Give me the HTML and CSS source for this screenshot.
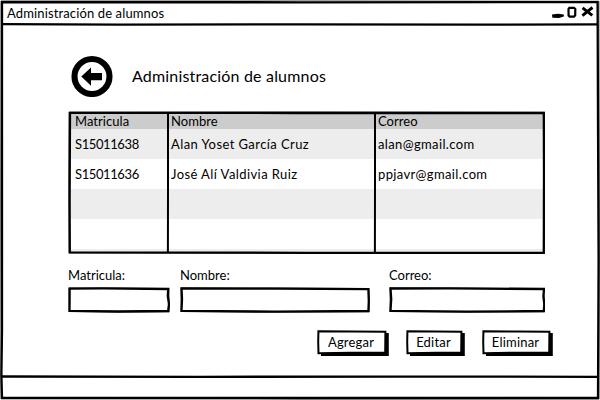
FILE: index.html
```html
<!DOCTYPE html>
<html lang="es">
<head>
<meta charset="utf-8">
<title>Administración de alumnos</title>
<link rel="stylesheet" href="styles.css">
</head>
<body>
<div class="window">
  <svg class="sketch" viewBox="0 0 600 400">
    <path class="soft" d="M1 1.2L300 .8L599 1.2L599.4 200L599 399L300 399.2L1 399L.6 200Z"/>
    <path class="line" d="M2 2L300 2.3L597.6 2.1L598 120L598.6 260L598 398L300 398L2 397.8L1.4 375L2 330L2 180Z"/>
    <path class="line" d="M2 24.1L120 24.6L300 24.4L480 24.6L598 24.4"/>
    <path class="line" d="M2 376.5L200 376.8L400 376.6L598 376.8"/>
  </svg>
  <header class="titlebar">
    <span class="caption">Administración de alumnos</span>
    <svg class="controls" width="44" height="16" viewBox="0 0 44 16">
      <path d="M1 9.6L7 8.8L12.8 9.4L12.8 11.6L8 13L1.4 12.8Z"/>
      <path class="box" d="M18.3 2.8L23 2.8L24.3 4L24.2 10.3L23 11.7L18.6 11.7L17.6 10.5L17.5 4Z"/>
      <path class="cross" d="M31.6 2.8L36 6.4L41.3 10.3M41.5 2.5L36 6.8L31.4 10.6"/>
    </svg>
  </header>
  <main class="content">
    <div class="heading">
      <svg class="back" width="42" height="42" viewBox="0 0 42 42">
        <circle cx="21" cy="21.5" r="17.5"/>
        <path d="M10.3 21.6L20 12.5V18H31V25.2H20V30.8Z"/>
      </svg>
      <h1>Administración de alumnos</h1>
    </div>
    <section class="table">
      <svg class="sketch" viewBox="0 0 477 143">
        <path class="soft" d="M1 1L240 .8L476.6 1.2L477 90L476.8 142.6L240 142.6L1 142L.6 70Z"/>
        <path class="line" d="M2 1.8L230 2L475.8 2L476 60L475.8 141.8L240 141.8L1.8 141.4L1.6 90Z"/>
      </svg>
      <div class="row head"><span>Matricula</span><span>Nombre</span><span>Correo</span></div>
      <div class="row shade"><span class="t-id">S15011638</span><span class="t-name">Alan Yoset García Cruz</span><span class="t-mail">alan@gmail.com</span></div>
      <div class="row"><span class="t-id">S15011636</span><span class="t-name">José Alí Valdivia Ruiz</span><span class="t-mail">ppjavr@gmail.com</span></div>
      <div class="row shade"></div>
      <div class="row"></div>
      <div class="row shade last"></div>
      <svg class="sketch" viewBox="0 0 477 143">
        <path class="rule" d="M100 2L100 80L99.9 141M307 2L307 70L306.9 141"/>
      </svg>
    </section>
    <section class="form">
      <div class="field"><label>Matricula:</label>
        <div class="input"><svg class="sketch" viewBox="0 0 102 26"><path class="soft" d="M1 .8L50 1L101 1.6L101.4 24.8L50 25.2L1 24.4Z"/><path class="line" d="M1.6 1.6L35 1.4L100.2 2L99.8 9L101 17L100.2 24L50 24.5L1.5 23.8L1.6 12Z"/></svg></div></div>
      <div class="field"><label>Nombre:</label>
        <div class="input"><svg class="sketch" viewBox="0 0 190 26"><path class="soft" d="M1 .8L95 .8L189 1.6L189.4 24.8L95 25.2L1 24.4Z"/><path class="line" d="M1.5 1.5L95 1.6L188.4 2.1L188.8 14L188.4 24L95 24.7L1.5 23.8L2 12Z"/></svg></div></div>
      <div class="field"><label>Correo:</label>
        <div class="input"><svg class="sketch" viewBox="0 0 156 26"><path class="soft" d="M1 .8L78 1L155 1.6L155.4 24.8L78 25.2L1 24.4Z"/><path class="line" d="M1.5 1.5L60 1.4L155 2L154.4 9L155.3 17L154.8 24L78 24.7L1.5 23.8L2.2 12Z"/></svg></div></div>
    </section>
    <div class="actions">
      <button><svg class="sketch" viewBox="0 0 72 26"><path class="shadow" d="M4 3H71.8V26H4Z"/><path class="face" d="M1.4 1.2L35 1.5L68.4 1.7L68.2 22.5L35 22.7L1.5 23.2L1.2 12Z"/></svg><span>Agregar</span></button>
      <button><svg class="sketch" viewBox="0 0 59 26"><path class="shadow" d="M4 3H58.8V26H4Z"/><path class="face" d="M1.4 1.2L30 1.5L55.4 1.7L55.2 22.5L30 22.7L1.5 23.2L1.2 12Z"/></svg><span>Editar</span></button>
      <button><svg class="sketch" viewBox="0 0 71 26"><path class="shadow" d="M4 3H70.8V26H4Z"/><path class="face" d="M1.4 1.2L35 1.5L67.4 1.7L67.2 22.5L35 22.7L1.5 23.2L1.2 12Z"/></svg><span>Eliminar</span></button>
    </div>
  </main>
</div>
</body>
</html>
```
FILE: styles.css
```css
* { box-sizing: border-box; margin: 0; padding: 0; }
body { background: #fff; color: #000; font: 400 13px/16px Lato, "Liberation Sans", sans-serif; }
.window { position: relative; width: 600px; height: 400px; overflow: hidden; }
.sketch { position: absolute; inset: 0; width: 100%; height: 100%; fill: none; stroke: #000; stroke-linejoin: miter; }
.soft { stroke: #777; stroke-width: 1; }
.line { stroke-width: 2.3; }
.rule { stroke-width: 2; }
.titlebar { position: relative; display: flex; justify-content: space-between; height: 24px; padding: 5px 5px 0 7px; }
.caption { letter-spacing: .13px; }
.controls .box { fill: none; stroke: #000; stroke-width: 2.2; }
.controls .cross { fill: none; stroke: #000; stroke-width: 2.9; }
.content { position: relative; padding: 31px 0 0 68px; }
.heading { display: flex; align-items: center; height: 42px; padding-left: 3px; gap: 19px; }
.back circle { fill: #fff; stroke: #000; stroke-width: 6.1; }
h1 { font-size: 16px; font-weight: 400; line-height: 20px; letter-spacing: .18px; }
.table { position: relative; width: 477px; height: 143px; margin-top: 14px; padding: 2px 2px 0; }
.row { display: grid; grid-template-columns: 96px 207px 1fr; align-items: center; height: 30px; padding-left: 5px; white-space: nowrap; }
.head { height: 16px; background: #ccc; letter-spacing: .05px; }
.shade { background: #ededed; }
.last { height: 4px; }
.t-id { letter-spacing: -.4px; }
.t-name { letter-spacing: .42px; }
.t-mail { letter-spacing: .36px; }
.form { display: grid; grid-template-columns: 102px 190px 156px; column-gap: 10px; width: 477px; margin-top: 13px; }
.field:last-child { margin-left: 9px; width: 156px; }
.field label { display: block; height: 20px; }
.input { position: relative; height: 26px; }
.actions { display: flex; margin: 17px 0 0 249px; gap: 17px; }
button { position: relative; width: 72px; height: 26px; padding: 0 4px 2px 0; border: 0; background: none; font: inherit; color: inherit; letter-spacing: .2px; }
button:nth-child(2) { width: 59px; }
button:nth-child(3) { width: 71px; }
button span { position: relative; }
.shadow { fill: #000; stroke: none; }
.face { fill: #fff; stroke-width: 2; }
```
